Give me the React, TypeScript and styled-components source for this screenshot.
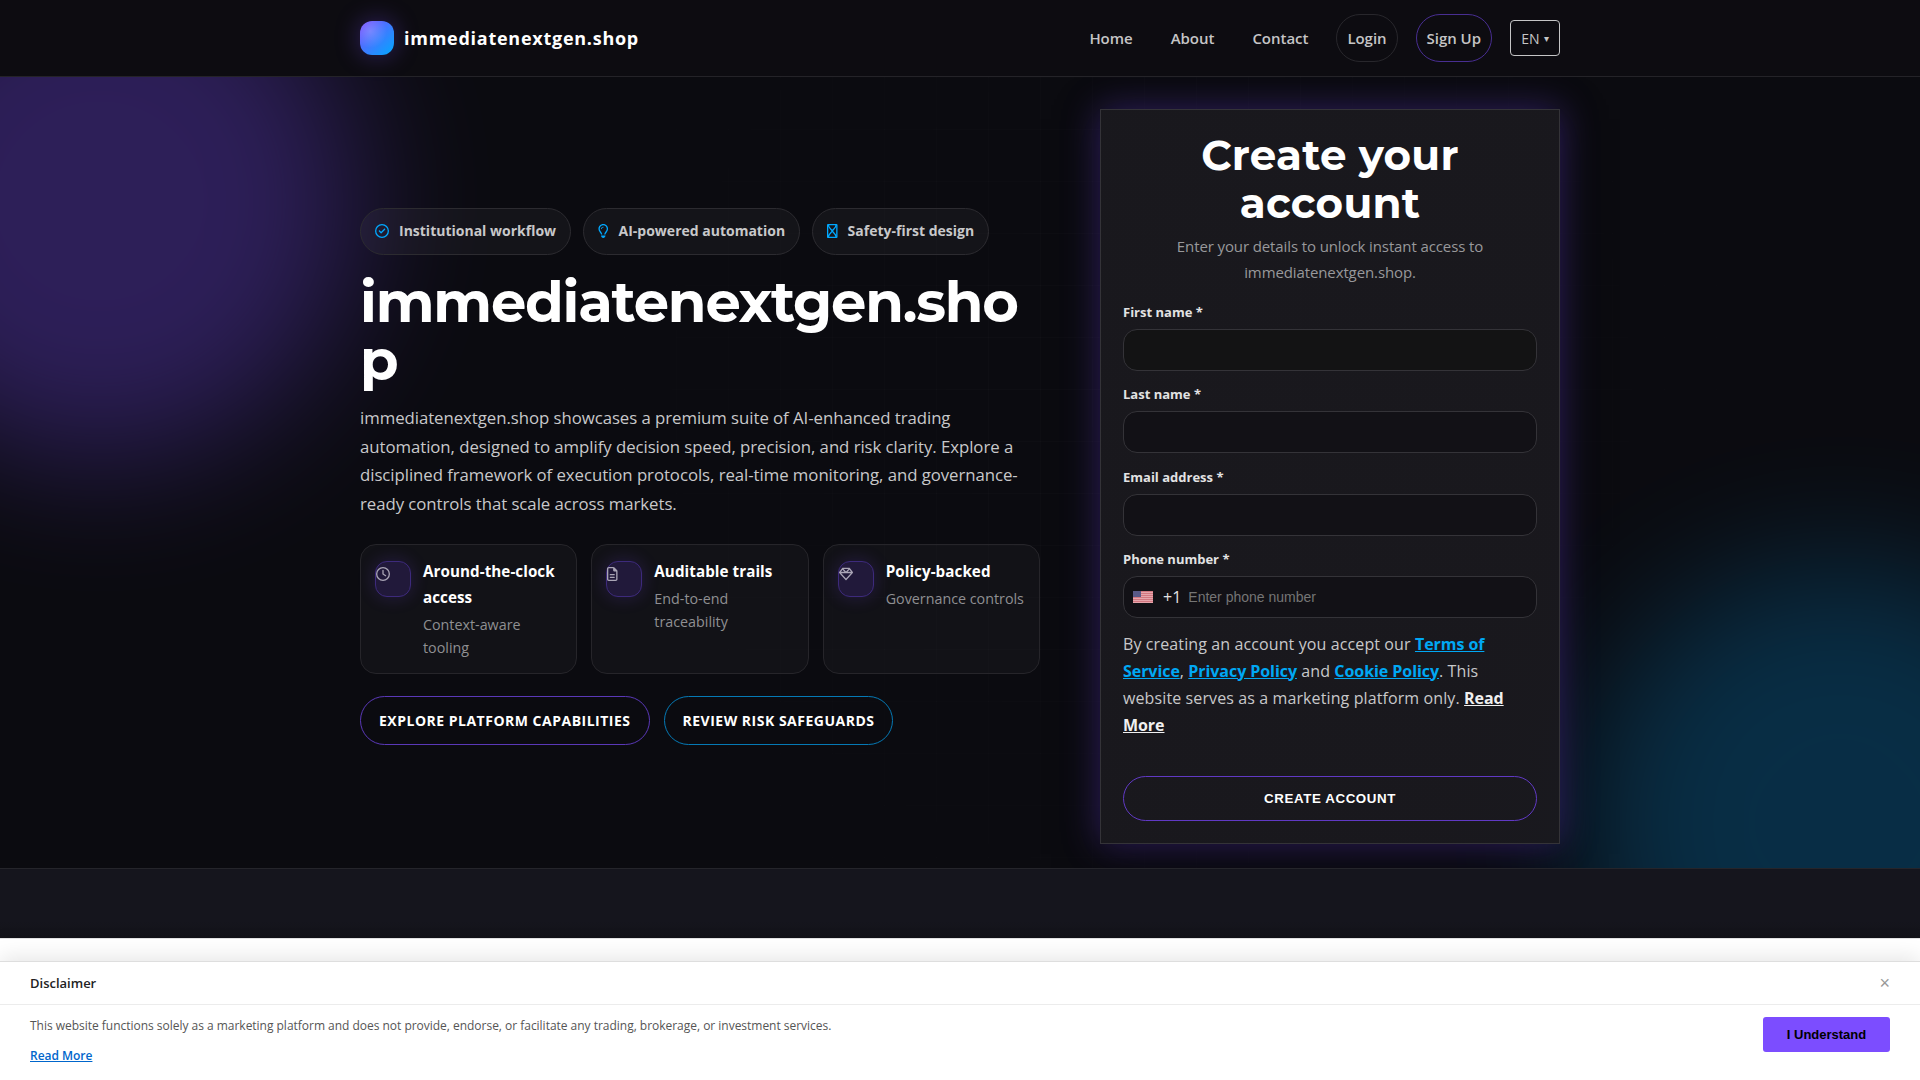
import React from "react";
import styled, { createGlobalStyle, css } from "styled-components";
import {
  FaRegCircleCheck,
  FaRegLightbulb,
  FaRegClock,
  FaRegFileLines,
  FaRegGem,
} from "react-icons/fa6";

const Global = createGlobalStyle`
  *, *::before, *::after { box-sizing: border-box; }
  html, body { margin: 0; padding: 0; height: 1080px; overflow: hidden; }
  body {
    background: #0b0b10;
    color: #c8c8ca;
    font-family: "Open Sans", "Noto Sans", sans-serif;
    font-size: 16px;
    line-height: 1.7;
  }
  a { color: inherit; text-decoration: none; }
  h1, h2, p { margin: 0; }
`;

const Page = styled.div`
  height: 1080px;
  display: flex;
  flex-direction: column;
  position: relative;
  overflow: hidden;
`;

const Header = styled.header`
  height: 77px;
  flex: none;
  background: #0d0c11;
  border-bottom: 1px solid #242328;
`;

const Container = styled.div`
  width: 1200px;
  margin: 0 auto;
`;

const HeaderRow = styled(Container)`
  height: 76px;
  display: flex;
  align-items: center;
  justify-content: space-between;
`;

const Brand = styled.a`
  display: flex;
  align-items: center;
  gap: 10px;
  color: #fff;
  font-weight: 700;
  font-size: 18px;
  letter-spacing: 0.74px;
`;

const Mark = styled.span`
  width: 34px;
  height: 34px;
  border-radius: 12px;
  background: radial-gradient(circle at 30% 30%, rgba(255, 255, 255, 0.2), transparent 50%),
    linear-gradient(135deg, #7c4dff, #00a8ff);
  box-shadow: 0 0 24px rgba(124, 77, 255, 0.35);
`;

const Nav = styled.nav`
  display: flex;
  align-items: center;
  gap: 18px;
`;

const NavLink = styled.a<{ $outline?: string }>`
  padding: 10px;
  font-size: 15px;
  line-height: 26px;
  font-weight: 600;
  letter-spacing: -0.03px;
  color: #c5c5c6;
  ${(p) =>
    p.$outline &&
    css`
      border: 1px solid ${p.$outline};
      border-radius: 999px;
    `}
`;

const Lang = styled.button`
  width: 50px;
  height: 36px;
  padding: 0;
  border: 1px solid #c5c5c6;
  border-radius: 4px;
  background: transparent;
  color: #c5c5c6;
  font: 14px "Open Sans", sans-serif;
  display: flex;
  align-items: center;
  justify-content: center;
  gap: 4px;
  small { font-size: 10px; }
`;

const Hero = styled.section`
  position: relative;
  flex: none;
  height: 791px;
  padding: 32px 0 24px;
  overflow: hidden;
`;

const Orb = styled.div<{ $tone: "violet" | "cyan" }>`
  position: absolute;
  width: 520px;
  height: 520px;
  border-radius: 50%;
  filter: blur(68px);
  ${(p) =>
    p.$tone === "violet"
      ? "left: -160px; top: -136px; background: #7c4dff; opacity: 0.3;"
      : "right: -180px; bottom: -214px; background: #00a8ff; opacity: 0.22;"}
`;

const GridLines = styled.div`
  position: absolute;
  inset: 0;
  background-image: linear-gradient(to right, rgba(255, 255, 255, 0.02) 1px, transparent 1px),
    linear-gradient(to bottom, rgba(255, 255, 255, 0.02) 1px, transparent 1px);
  background-size: 52px 52px;
  mask-image: radial-gradient(circle at 60% 40%, #000, transparent 55%);
`;

const HeroGrid = styled(Container)`
  position: relative;
  display: grid;
  grid-template-columns: 680px 460px;
  gap: 60px;
  align-items: center;
`;

const Pills = styled.div`
  display: flex;
  gap: 12px;
`;

const Pill = styled.span<{ $iconWidth?: number }>`
  display: flex;
  align-items: center;
  gap: 10px;
  height: 47px;
  padding: 0 14px;
  border: 1px solid #2c2b30;
  border-radius: 999px;
  background: rgba(255, 255, 255, 0.04);
  font-size: 14px;
  font-weight: 700;
  white-space: nowrap;
  svg { color: #00a8ff; width: ${(p) => p.$iconWidth ?? 14}px; height: 14px; flex: none; }
`;

const Title = styled.h1`
  margin: 18px 0 14px;
  font-family: Montserrat, "Open Sans", sans-serif;
  font-weight: 700;
  font-size: 56px;
  line-height: 58.8px;
  letter-spacing: -1.22px;
  color: #fff;
  word-break: break-all;
  width: 670px;
`;

const Lead = styled.p`
  font-size: 16.8px;
  line-height: 28.6px;
  letter-spacing: -0.055px;
  white-space: nowrap;
`;

const Features = styled.div`
  display: grid;
  grid-template-columns: repeat(3, 1fr);
  gap: 14px;
  margin: 26px 0 22px;
`;

const Feature = styled.div`
  display: flex;
  gap: 12px;
  min-height: 130px;
  padding: 14px;
  border: 1px solid #26252a;
  border-radius: 16px;
  background: rgba(255, 255, 255, 0.03);
`;

const FeatureIcon = styled.span<{ $iconWidth: number }>`
  width: 36px;
  height: 36px;
  flex: none;
  margin-top: 2px;
  padding-top: 5px;
  border: 1px solid #3d2a7c;
  border-radius: 12px;
  background: #21193a;
  box-shadow: 0 0 18px rgba(124, 77, 255, 0.2);
  svg { display: block; width: ${(p) => p.$iconWidth}px; height: 14px; color: #aaa5b6; }
`;

const FeatureTitle = styled.div`
  margin-top: -1px;
  font-size: 15.2px;
  line-height: 26px;
  font-weight: 700;
  letter-spacing: 0.06px;
  color: #fff;
`;

const FeatureText = styled.div`
  margin-top: 3px;
  font-size: 14.3px;
  line-height: 23px;
  color: #8f8f92;
`;

const Actions = styled.div`
  display: flex;
  gap: 14px;
`;

const OutlineButton = styled.a<{ $color: string }>`
  height: 49px;
  padding: 0 18px;
  display: flex;
  align-items: center;
  border: 1px solid ${(p) => p.$color};
  border-radius: 999px;
  color: #fff;
  font-size: 14px;
  font-weight: 700;
  letter-spacing: 0.5px;
  white-space: nowrap;
`;

const FormCard = styled.form`
  height: 735px;
  padding: 22px;
  display: flex;
  flex-direction: column;
  border: 1px solid #343338;
  background: linear-gradient(rgba(26, 25, 30, 0.94), rgba(26, 25, 30, 0.94));
  box-shadow: 0 0 34px rgba(124, 77, 255, 0.35), 0 10px 40px rgba(0, 0, 0, 0.6);
`;

const FormTitle = styled.h2`
  font-family: Montserrat, "Open Sans", sans-serif;
  font-size: 42px;
  line-height: 47.8px;
  font-weight: 700;
  text-align: center;
  color: #fff;
  letter-spacing: 0.25px;
`;

const FormSub = styled.p`
  margin: 5px 0 16.5px;
  font-size: 15px;
  line-height: 26px;
  letter-spacing: -0.11px;
  text-align: center;
  color: #98989b;
`;

const Field = styled.label`
  display: block;
  height: 70.4px;
  margin-bottom: 12px;
  font-size: 13px;
  line-height: 22px;
  font-weight: 700;
  color: #e2e2e3;
`;

const InputBox = styled.span<{ $neutral?: boolean }>`
  display: flex;
  align-items: center;
  margin-top: 6px;
  height: 42px;
  padding: 0 9px;
  border: 1px solid #343338;
  border-radius: 14px;
  background: ${(p) => (p.$neutral ? "#131314" : "#121116")};
  font-size: 16px;
  font-weight: 400;
  color: #e2e2e3;
`;

const Input = styled.input`
  flex: 1;
  min-width: 0;
  padding: 0;
  border: 0;
  outline: 0;
  background: transparent;
  color: #fff;
  font: 14px "Liberation Sans", Arial, sans-serif;
  &::placeholder { color: #757575; opacity: 1; }
`;

const Dial = styled.span`
  margin: 0 7px 0 10px;
`;

const Terms = styled.p`
  font-size: 16px;
  line-height: 27px;
  letter-spacing: 0.11px;
  a { color: #00a8f4; font-weight: 700; letter-spacing: -0.06px; text-decoration: underline; }
  a:last-child { color: #f0f0f0; }
`;

const Submit = styled.button`
  margin-top: auto;
  height: 45px;
  flex: none;
  border: 1px solid #6039c4;
  border-radius: 999px;
  background: transparent;
  color: #fff;
  font: 700 13.33px "Liberation Sans", Arial, sans-serif;
  letter-spacing: 0.6px;
`;

const Band = styled.section`
  flex: none;
  height: 70px;
  border-top: 1px solid #25252b;
  background: linear-gradient(#15151d, #15151d 75%, #131319);
`;

const Underlay = styled.div`
  flex: none;
  height: 23px;
  background: #fff;
  border-top: 1px solid #e2e2e2;
  box-shadow: 0 -2px 10px rgba(0, 0, 0, 0.1);
  position: relative;
`;

const Notice = styled.aside`
  flex: 1;
  position: relative;
  background: #fff;
  border-top: 1px solid #dedede;
  box-shadow: 0 -4px 20px rgba(0, 0, 0, 0.1);
  color: #222;
`;

const NoticeHead = styled.div`
  height: 43px;
  padding: 0 30px;
  display: flex;
  align-items: center;
  justify-content: space-between;
  border-bottom: 1px solid #ececec;
  font-size: 13px;
  font-weight: 600;
`;

const Close = styled.button`
  padding: 0;
  border: 0;
  background: none;
  color: #999;
  font: 18px "Liberation Sans", Arial, sans-serif;
`;

const NoticeBody = styled.div`
  padding: 12px 30px;
  display: flex;
  justify-content: space-between;
  align-items: flex-start;
  font-size: 12px;
  line-height: 18px;
  letter-spacing: -0.021px;
  color: #555;
  a {
    display: block;
    margin-top: 12px;
    color: #0066cc;
    font-weight: 600;
    text-decoration: underline;
  }
`;

const Accept = styled.button`
  width: 127px;
  height: 35px;
  border: 0;
  border-radius: 3px;
  background: #7c4dff;
  color: #000;
  font: 700 13px "Liberation Sans", Arial, sans-serif;
`;

const Hourglass = () => (
  <svg viewBox="0 0 10.5 14" fill="none" stroke="currentColor" strokeWidth="1.3" strokeLinejoin="round">
    <rect x="0.65" y="0.65" width="9.2" height="12.7" rx="0.4" />
    <path d="M1.4 1c0 3 3.2 4.400 3.850 6C4.600 8.600 1.400 10 1.400 13M9.100 1c0 3-3.200 4.400-3.850 6c0.650 1.600 3.850 3 3.850 6" />
  </svg>
);

const Flag = () => (
  <svg width="20" height="12" viewBox="0 0 20 12">
    <rect width="20" height="12" fill="#e6a5ac" />
    {[0, 2, 4, 6, 8, 10].map((y) => (
      <rect key={y} y={y} width="20" height="1" fill="#d27780" />
    ))}
    <rect width="8" height="6" fill="#595987" />
  </svg>
);

const features = [
  { icon: <FaRegClock />, width: 14, title: "Around-the-clock access", text: "Context-aware tooling" },
  { icon: <FaRegFileLines />, width: 10.5, title: "Auditable trails", text: "End-to-end traceability" },
  { icon: <FaRegGem />, width: 14, title: "Policy-backed", text: "Governance controls" },
];

export default function App() {
  return (
    <Page>
      <Global />
      <Header>
        <HeaderRow>
          <Brand href="#">
            <Mark />
            immediatenextgen.shop
          </Brand>
          <Nav>
            <NavLink href="#">Home</NavLink>
            <NavLink href="#">About</NavLink>
            <NavLink href="#">Contact</NavLink>
            <NavLink href="#" $outline="#28272c">Login</NavLink>
            <NavLink href="#" $outline="#482e92">Sign Up</NavLink>
            <Lang type="button">
              EN <small>▾</small>
            </Lang>
          </Nav>
        </HeaderRow>
      </Header>
      <Hero>
        <Orb $tone="violet" />
        <Orb $tone="cyan" />
        <GridLines />
        <HeroGrid>
          <div>
            <Pills>
              <Pill><FaRegCircleCheck />Institutional workflow</Pill>
              <Pill $iconWidth={10.5}><FaRegLightbulb />AI-powered automation</Pill>
              <Pill $iconWidth={10.5}><Hourglass />Safety-first design</Pill>
            </Pills>
            <Title>immediatenextgen.shop</Title>
            <Lead>
              immediatenextgen.shop showcases a premium suite of AI-enhanced trading<br />
              automation, designed to amplify decision speed, precision, and risk clarity. Explore a<br />
              disciplined framework of execution protocols, real-time monitoring, and governance-<br />
              ready controls that scale across markets.
            </Lead>
            <Features>
              {features.map((f) => (
                <Feature key={f.title}>
                  <FeatureIcon $iconWidth={f.width}>{f.icon}</FeatureIcon>
                  <div>
                    <FeatureTitle>{f.title}</FeatureTitle>
                    <FeatureText>{f.text}</FeatureText>
                  </div>
                </Feature>
              ))}
            </Features>
            <Actions>
              <OutlineButton href="#" $color="#5a38b8">EXPLORE PLATFORM CAPABILITIES</OutlineButton>
              <OutlineButton href="#" $color="#0579b5">REVIEW RISK SAFEGUARDS</OutlineButton>
            </Actions>
          </div>
          <FormCard>
            <FormTitle>Create your<br />account</FormTitle>
            <FormSub>Enter your details to unlock instant access to<br />immediatenextgen.shop.</FormSub>
            <Field>First name *<InputBox $neutral><Input /></InputBox></Field>
            <Field>Last name *<InputBox><Input /></InputBox></Field>
            <Field>Email address *<InputBox><Input /></InputBox></Field>
            <Field>
              Phone number *
              <InputBox>
                <Flag />
                <Dial>+1</Dial>
                <Input placeholder="Enter phone number" />
              </InputBox>
            </Field>
            <Terms>
              By creating an account you accept our <a href="#">Terms of<br />Service</a>, <a href="#">Privacy Policy</a> and <a href="#">Cookie Policy</a>. This<br />
              website serves as a marketing platform only. <a href="#">Read<br />More</a>
            </Terms>
            <Submit type="button">CREATE ACCOUNT</Submit>
          </FormCard>
        </HeroGrid>
      </Hero>
      <Band />
      <Underlay />
      <Notice>
        <NoticeHead>
          Disclaimer
          <Close type="button">×</Close>
        </NoticeHead>
        <NoticeBody>
          <div>
            This website functions solely as a marketing platform and does not provide, endorse, or facilitate any trading, brokerage, or investment services.
            <a href="#">Read More</a>
          </div>
          <Accept type="button">I Understand</Accept>
        </NoticeBody>
      </Notice>
    </Page>
  );
}
